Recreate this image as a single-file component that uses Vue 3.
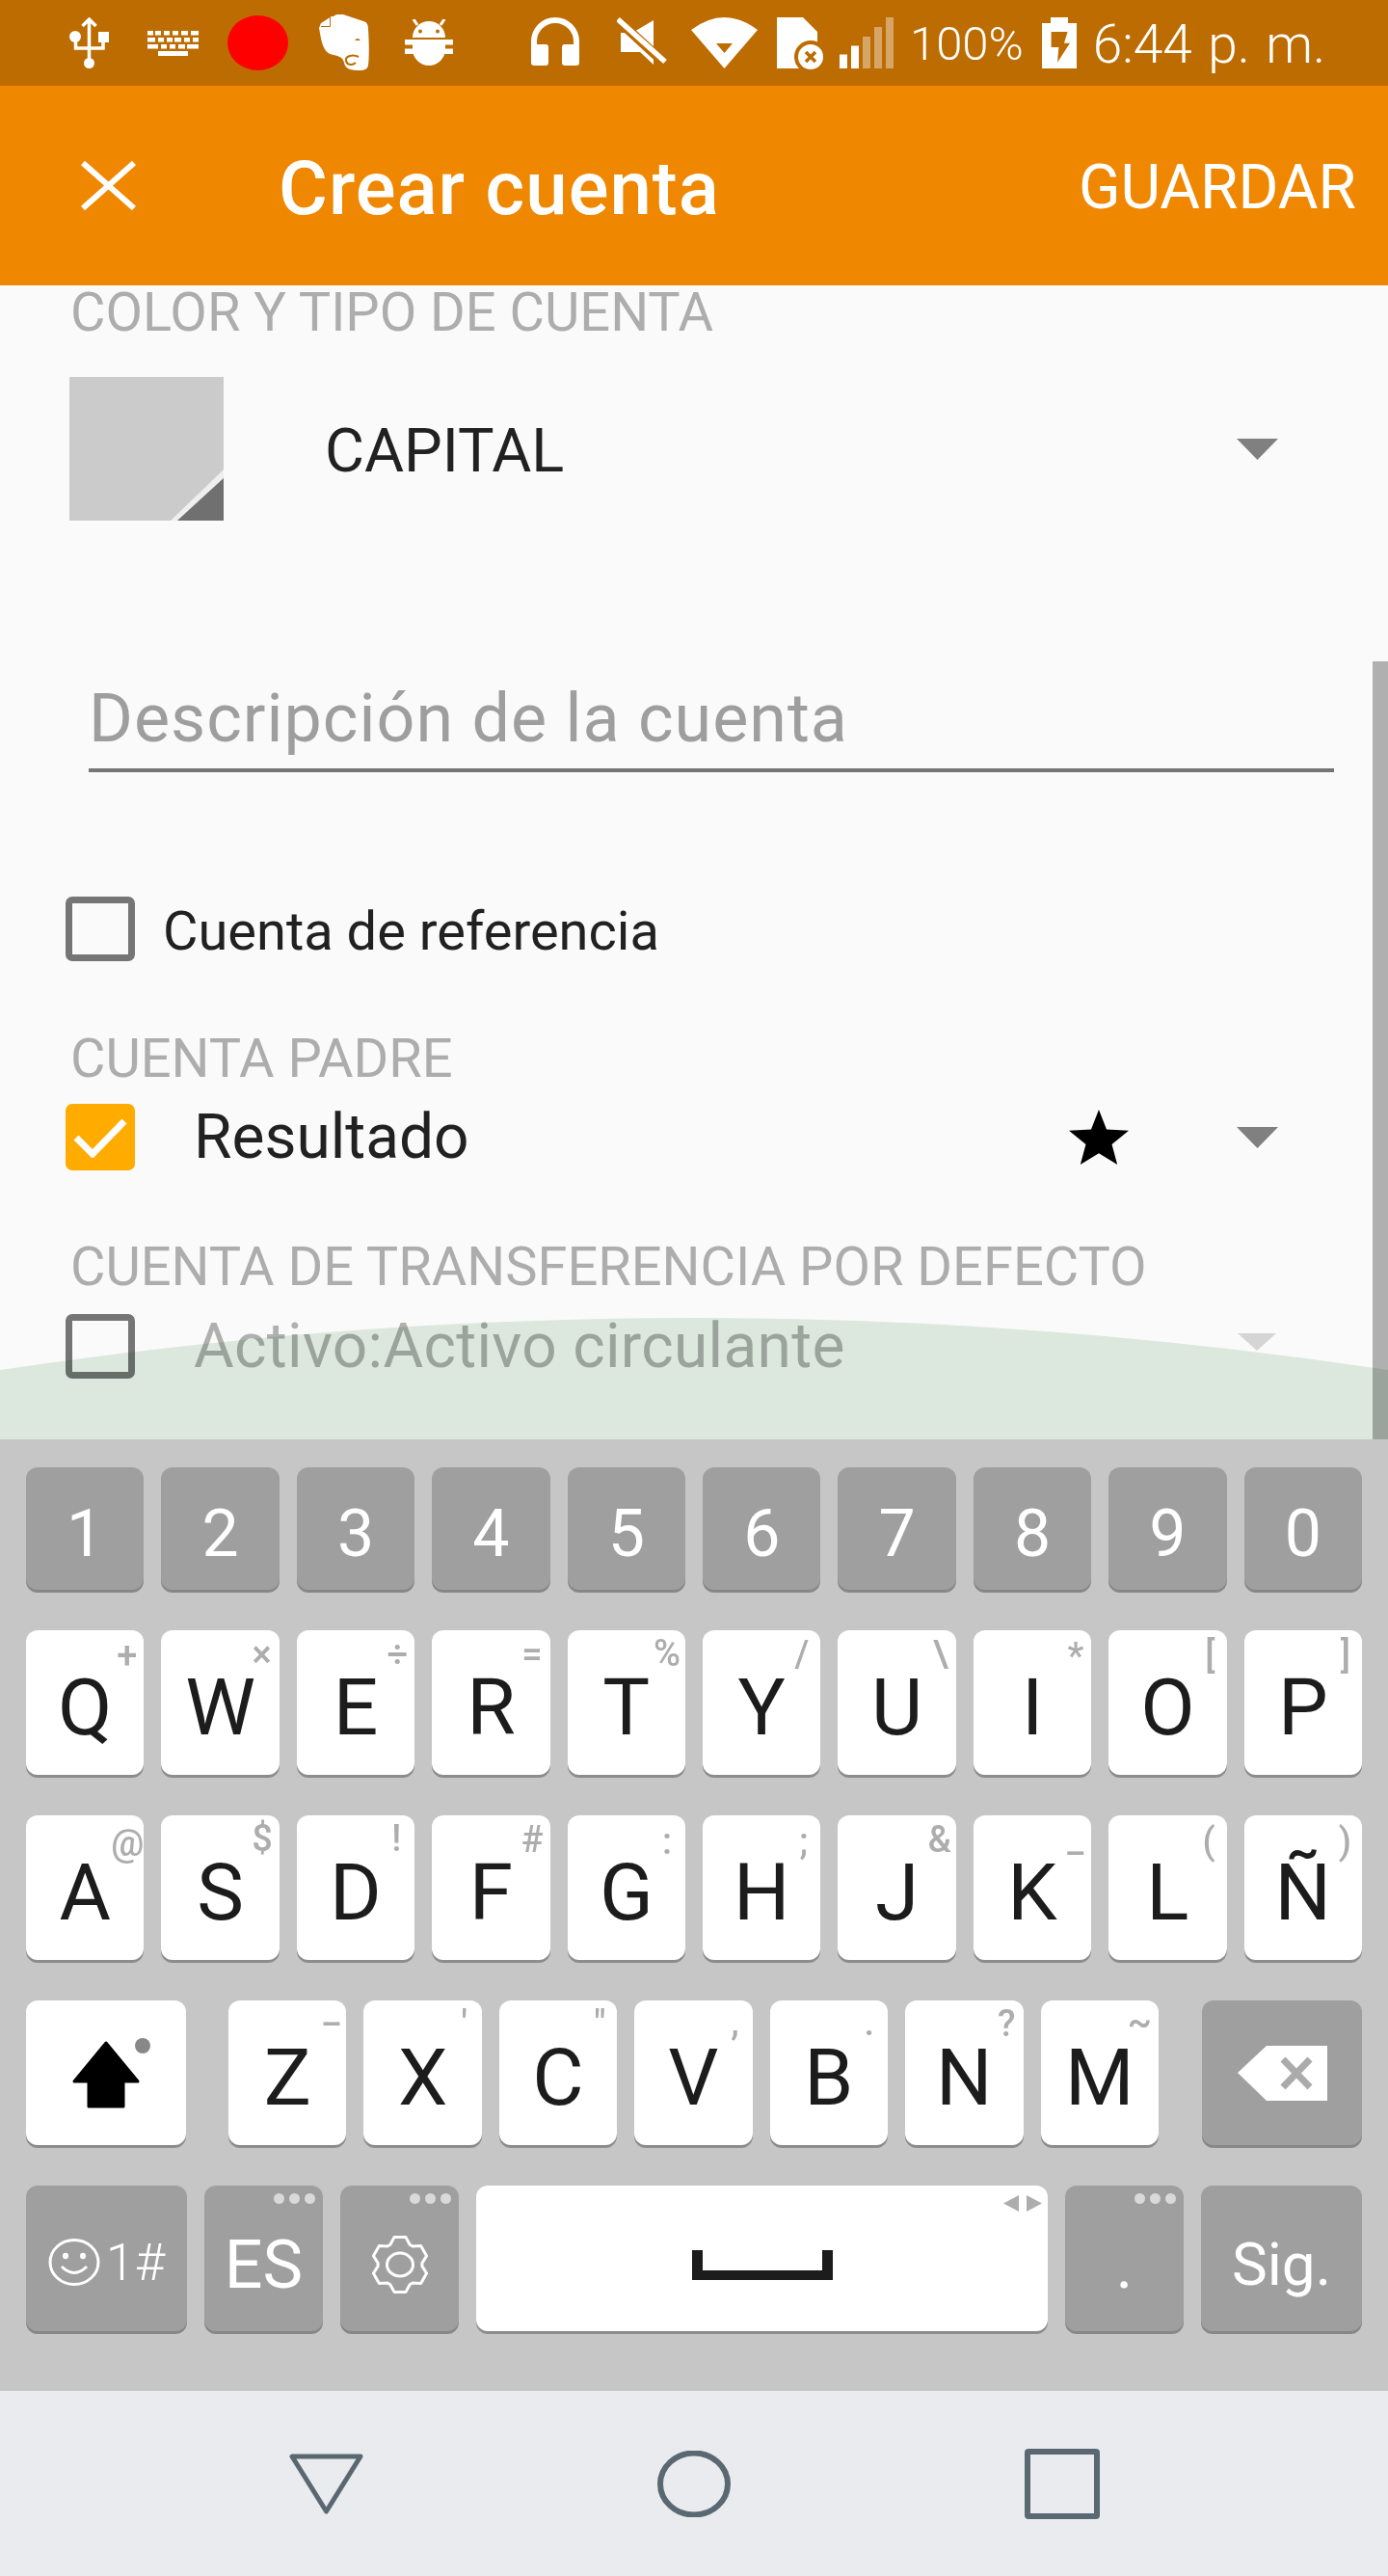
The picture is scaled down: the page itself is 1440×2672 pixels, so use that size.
<template>
  <div class="screen">
    <header class="status">
      <svg class="usb" width="41" height="53" viewBox="0 0 41 53">
        <g fill="none" stroke="#fff" stroke-width="3.5">
          <path d="M20.5 2V48M13.5 9L20.5 2L27.5 9" />
          <path d="M6.5 20V32H35V24" />
        </g>
        <circle cx="20.5" cy="47.5" r="5.5" fill="#fff" />
        <circle cx="6" cy="20" r="6" fill="#fff" />
        <rect x="30" y="15" width="11" height="11" fill="#fff" />
      </svg>
      <svg class="kbd" width="54" height="26" viewBox="0 0 54 26">
        <rect v-for="r in kbdKeys" :key="r.join()" :x="r[0]" :y="r[1]" :width="r[2]" :height="r[3]" fill="#fff" />
      </svg>
      <div class="rec"></div>
      <svg class="elephant" width="52" height="58" viewBox="0 0 52 58">
        <path fill="#fff" d="M15 2C18-1 24-1 28 1L46 7C50 8 51 11 51 15C52 30 52 45 51 53C50 57 47 58 42 58C34 58 27 57 26 50C25 45 21 43 15 42C7 41 4 34 2 25L0 14L2 9L13 2Z" />
        <path fill="none" stroke="#BC6C00" stroke-width="1" d="M2 12.5H11.5V3" />
        <path fill="#BC6C00" d="M37 27Q40 23 43 27Z" />
        <path fill="none" stroke="#BC6C00" stroke-width="2" d="M41 44C35 41 27 43 28 48C29 53 35 53 38 50" />
      </svg>
      <svg class="bug" width="50" height="48" viewBox="0 0 50 48">
        <path fill="#fff" d="M8 19A17 17 0 0 1 42 19Z" />
        <path stroke="#fff" stroke-width="3" d="M13 6L9 0M37 6L41 0" />
        <circle cx="16" cy="12.5" r="2" fill="#BC6C00" />
        <circle cx="34" cy="12.5" r="2" fill="#BC6C00" />
        <path fill="#fff" d="M8 21H42V31A17 17 0 0 1 8 31Z" />
        <rect y="21" width="50" height="5.5" fill="#fff" />
        <rect y="30.5" width="50" height="5.5" fill="#fff" />
      </svg>
      <svg class="phones" width="50" height="50" viewBox="0 0 50 50">
        <path fill="none" stroke="#fff" stroke-width="6" d="M3 32V25A22 22 0 0 1 47 25V32" />
        <rect y="28" width="18" height="22" rx="3" fill="#fff" />
        <rect x="32" y="28" width="18" height="22" rx="3" fill="#fff" />
      </svg>
      <svg class="mute" width="52" height="50" viewBox="0 0 52 50">
        <path fill="#fff" d="M4 16H16L38 3V49L24 36H4Z" />
        <path stroke="#BC6C00" stroke-width="10" d="M0 2L50 48" />
        <path stroke="#fff" stroke-width="5.5" d="M1 2L50 46" />
      </svg>
      <svg class="wifi" width="69" height="53" viewBox="0 0 69 53">
        <path fill="#fff" d="M0 13Q34.5-13 69 13L34.5 53Z" />
        <path fill="#BC6C00" d="M26 27H43L34.5 37Z" />
      </svg>
      <svg class="sim" width="52" height="55" viewBox="0 0 52 55">
        <path fill="#fff" d="M0 0H27L42 15V53H0Z" />
        <circle cx="35" cy="41" r="17" fill="#BC6C00" />
        <circle cx="35" cy="41" r="13" fill="#fff" />
        <path stroke="#BC6C00" stroke-width="3.5" d="M30 36L40 46M40 36L30 46" />
      </svg>
      <svg class="signal" width="56" height="53" viewBox="0 0 56 53">
        <rect v-for="(b, i) in signalBars" :key="i" :x="i * 12" :y="b" width="8" :height="53 - b" fill="#fff" :opacity="i < 2 ? 1 : 0.4" />
      </svg>
      <span class="pct">100%</span>
      <svg class="batt" width="36" height="53" viewBox="0 0 36 53">
        <path fill="#fff" d="M9 0H27V6H36V53H0V6H9Z" />
        <path fill="#BC6C00" d="M9.6 15H26.6L23 26.7H29L16 46.7L17.4 31H9.6Z" />
      </svg>
      <span class="clock">6:44 p. m.</span>
    </header>

    <div class="appbar">
      <svg class="close" width="57" height="51" viewBox="0 0 57 51">
        <path stroke="#fff" stroke-width="6" d="M2 2L55 49M55 2L2 49" />
      </svg>
      <h1 class="title">Crear cuenta</h1>
      <span class="save">GUARDAR</span>
    </div>

    <main class="content">
      <div class="label label--first">COLOR Y TIPO DE CUENTA</div>
      <div class="type-row">
        <svg width="160" height="149" viewBox="0 0 160 149">
          <rect width="160" height="149" fill="#CBCBCB" />
          <path fill="#EFEFEF" d="M105 149H112L160 105V96Z" />
          <path fill="#707070" d="M112 149L160 105V149Z" />
        </svg>
        <span class="type-name">CAPITAL</span>
        <svg class="caret" width="43" height="22" viewBox="0 0 43 22"><path d="M0 0H43L21.5 22Z" fill="#808080" /></svg>
      </div>

      <div class="field">Descripción de la cuenta</div>

      <div class="check-row check-row--ref">
        <span class="box"></span>
        <span class="ref-text">Cuenta de referencia</span>
      </div>

      <div class="label label--parent">CUENTA PADRE</div>
      <div class="check-row check-row--parent">
        <span class="box box--on">
          <svg width="56" height="42" viewBox="0 0 56 42"><path d="M3 21L20 38L53 4" fill="none" stroke="#fff" stroke-width="7" /></svg>
        </span>
        <span class="acc-text">Resultado</span>
        <svg class="star" width="62" height="57" viewBox="0 0 62 57">
          <path d="M31 0L39 20.5L62 21.8L44.5 36L50.2 57L31 45.3L11.8 57L17.5 36L0 21.8L23 20.5Z" fill="#000" />
        </svg>
        <svg class="caret caret--star" width="43" height="22" viewBox="0 0 43 22"><path d="M0 0H43L21.5 22Z" fill="#808080" /></svg>
      </div>

      <div class="label label--transfer">CUENTA DE TRANSFERENCIA POR DEFECTO</div>
      <div class="check-row check-row--transfer">
        <span class="box"></span>
        <span class="acc-text acc-text--off">Activo:Activo circulante</span>
        <svg class="caret caret--off" width="40" height="18" viewBox="0 0 40 18"><path d="M0 0H40L20 18Z" fill="#D5D5D5" /></svg>
      </div>

      <div class="scrollbar"></div>
      <svg class="glow" width="1440" height="126" viewBox="0 0 1440 126" preserveAspectRatio="none">
        <path d="M0 54Q720-54 1440 54V126H0Z" fill="#E1EDE3" />
      </svg>
    </main>

    <section class="keyboard">
      <div class="row row--num">
        <div v-for="n in numbers" :key="n" class="key key--dark key--num">{{ n }}</div>
      </div>

      <div v-for="(row, i) in letterRows" :key="i" class="row">
        <div v-for="k in row" :key="k[0]" class="key">
          <span class="hint" :style="hintPos(k)">{{ k[1] }}</span>
          <span class="letter">{{ k[0] }}</span>
        </div>
      </div>

      <div class="row">
        <div class="key key--side">
          <svg class="shift" width="70" height="70" viewBox="0 0 70 70">
            <path d="M35 2L68 42H53V68H17V42H2Z" fill="#000" stroke="#000" stroke-width="3" stroke-linejoin="round" />
          </svg>
          <span class="shift-dot"></span>
        </div>
        <div class="z-keys">
          <div v-for="k in bottomLetters" :key="k[0]" class="key">
            <span class="hint" :style="hintPos(k)">{{ k[1] }}</span>
            <span class="letter">{{ k[0] }}</span>
          </div>
        </div>
        <div class="key key--dark key--side">
          <svg width="93" height="57" viewBox="0 0 93 57">
            <path d="M0 28L30 0H93V57H30Z" fill="#fff" />
            <path d="M47 14L75 43M75 14L47 43" stroke="#ABABAB" stroke-width="7" />
          </svg>
        </div>
      </div>

      <div class="row row--last">
        <div class="key key--dark key--sym">
          <svg width="54" height="49" viewBox="0 0 54 49">
            <ellipse cx="27" cy="24.5" rx="25" ry="23" fill="none" stroke="#fff" stroke-width="3" />
            <ellipse cx="18" cy="18" rx="3" ry="3.2" fill="#fff" />
            <ellipse cx="36" cy="18" rx="3" ry="3.2" fill="#fff" />
            <path d="M14 29Q27 42 40 29" fill="none" stroke="#fff" stroke-width="3" />
          </svg>
          <span class="sym-text">1#</span>
        </div>
        <div class="key key--dark key--small">
          <span class="dots"><i></i><i></i><i></i></span>
          <span class="lang">ES</span>
        </div>
        <div class="key key--dark key--small">
          <span class="dots"><i></i><i></i><i></i></span>
          <svg width="62" height="60" viewBox="-31 -30 62 60">
            <polygon :points="gearPoints" fill="none" stroke="#fff" stroke-width="3" stroke-linejoin="round" />
            <ellipse rx="13.5" ry="12" fill="none" stroke="#fff" stroke-width="3" />
          </svg>
        </div>
        <div class="key key--space">
          <svg class="arrows" width="40" height="17" viewBox="0 0 40 17">
            <path d="M16 0V17L0 8.5ZM24 0V17L40 8.5Z" fill="#ADADAD" />
          </svg>
          <span class="spacebar"></span>
        </div>
        <div class="key key--dark key--small">
          <span class="dots"><i></i><i></i><i></i></span>
          <span class="dot-label">.</span>
        </div>
        <div class="key key--dark key--next">Sig.</div>
      </div>
    </section>

    <nav class="nav">
      <svg width="77" height="63" viewBox="0 0 77 63">
        <path d="M3 3H74L38.5 60Z" fill="none" stroke="#5A6872" stroke-width="5" stroke-linejoin="round" />
      </svg>
      <svg width="76" height="69" viewBox="0 0 76 69">
        <ellipse cx="38" cy="34.5" rx="35" ry="32" fill="none" stroke="#5A6872" stroke-width="6" />
      </svg>
      <svg width="78" height="73" viewBox="0 0 78 73">
        <rect x="3" y="3" width="72" height="67" rx="1" fill="none" stroke="#5A6872" stroke-width="6" />
      </svg>
    </nav>
  </div>
</template>

<script setup>
const numbers = ['1', '2', '3', '4', '5', '6', '7', '8', '9', '0'];

// [letter, hint, right offset, top offset]
const letterRows = [
  [
    ['Q', '+', 7, 6], ['W', '×', 8, 5], ['E', '÷', 7, 5], ['R', '=', 8, 5], ['T', '%', 5, 4],
    ['Y', '/', 12, 5], ['U', '\\', 8, 5], ['I', '*', 8, 7], ['O', '[', 12, 6], ['P', ']', 12, 6],
  ],
  [
    ['A', '@', 0, 9], ['S', '$', 7, 4], ['D', '!', 14, 4], ['F', '#', 7, 5], ['G', ':', 14, 7],
    ['H', ';', 13, 7], ['J', '&', 5, 5], ['K', '_', 8, 4], ['L', '(', 12, 7], ['Ñ', ')', 11, 7],
  ],
];

const bottomLetters = [
  ['Z', '_', 7, -11], ['X', "'", 15, 4], ['C', '"', 12, 4], ['V', ',', 14, 2],
  ['B', '.', 14, 3], ['N', '?', 8, 4], ['M', '~', 7, 2],
];

const hintPos = (k) => ({ right: k[2] + 'px', top: k[3] + 'px' });

const signalBars = [38.5, 29.5, 20, 10, 0];

const kbdKeys = [
  ...[[0, 6], [8, 6], [17, 6], [26, 6], [35, 7], [45, 8]].map(([x, w]) => [x, 0, w, 4.5]),
  ...[[0, 8], [11, 6], [20, 6], [28, 7], [38, 6], [47, 6]].map(([x, w]) => [x, 7, w, 4.5]),
  ...[[0, 11], [14, 6], [23, 6], [32, 7], [41, 12]].map(([x, w]) => [x, 14, w, 4.5]),
  [11, 21, 31, 5],
];

const gearPoints = (() => {
  const pts = [];
  for (let i = 0; i < 6; i++) {
    const a = -90 + i * 60;
    [[-26, 23], [-12, 29], [12, 29], [26, 23]].forEach(([d, r]) => {
      const t = ((a + d) * Math.PI) / 180;
      pts.push(`${(Math.cos(t) * r).toFixed(1)},${(Math.sin(t) * r).toFixed(1)}`);
    });
  }
  return pts.join(' ');
})();
</script>

<style scoped>
.screen {
  width: 1440px;
  height: 2672px;
  overflow: hidden;
  font-family: Roboto, "Liberation Sans", sans-serif;
}

.status {
  height: 89px;
  background: #BC6C00;
  display: flex;
  align-items: flex-start;
  color: #fff;
  position: relative;
}
.status svg, .rec { flex: none; }
.usb { margin: 18px 0 0 72px; }
.kbd { margin: 32px 0 0 40px; }
.rec {
  width: 63px;
  height: 57px;
  margin: 16px 0 0 29px;
  border-radius: 50%;
  background: #f00;
}
.elephant { margin: 15px 0 0 32px; }
.bug { margin: 20px 0 0 37px; }
.phones { margin: 18px 0 0 81px; }
.mute { margin: 18px 0 0 39px; }
.wifi { margin: 18px 0 0 25px; }
.sim { margin: 18px 0 0 20px; }
.signal { margin: 18px 0 0 13px; }
.pct {
  margin-left: 17px;
  font-size: 49px;
  font-weight: 300;
  line-height: 92px;
}
.batt { margin: 18px 0 0 19px; }
.clock {
  margin-left: 17px;
  font-size: 55px;
  font-weight: 300;
  line-height: 92px;
  word-spacing: 3px;
  white-space: nowrap;
}

.appbar {
  height: 207px;
  background: #EF8700;
  display: flex;
  align-items: center;
  color: #fff;
}
.close { margin-left: 84px; flex: none; }
.title {
  margin: 5px 0 0 148px;
  font-size: 78px;
  font-weight: 500;
  letter-spacing: 1px;
}
.save {
  margin-left: auto;
  padding: 3px 33px 0 0;
  font-size: 64px;
  font-weight: 400;
}

.content {
  height: 1197px;
  background: #FAFAFA;
  position: relative;
}
.label {
  height: 56px;
  line-height: 56px;
  padding-left: 73px;
  font-size: 56px;
  color: #ADADAD;
  white-space: nowrap;
}
.label--parent { margin-top: 73px; }
.label--transfer { margin-top: 72px; }

.type-row {
  margin-top: 39px;
  padding: 0 114px 0 72px;
  display: flex;
  align-items: center;
}
.type-name {
  margin-left: 105px;
  padding-top: 3px;
  font-size: 63px;
  color: #212121;
}
.caret { margin-left: auto; flex: none; }
.caret--star { margin-left: 112px; }
.caret--off { margin-right: 2px; margin-top: -10px; }

.field {
  margin: 160px 56px 0 92px;
  height: 97px;
  line-height: 90px;
  font-size: 70px;
  letter-spacing: 1px;
  color: #9E9E9E;
  border-bottom: 4px solid #757575;
}

.check-row {
  display: flex;
  align-items: center;
  padding: 0 114px 0 68px;
}
.check-row--ref { margin-top: 129px; height: 67px; }
.check-row--parent { margin-top: 19px; height: 69px; }
.check-row--transfer { margin-top: 21px; height: 67px; }
.box {
  width: 72px;
  height: 67px;
  flex: none;
  box-sizing: border-box;
  border: 7px solid #757575;
  border-radius: 7px;
}
.box--on {
  height: 69px;
  background: #FFAB00;
  border: none;
  display: flex;
  align-items: center;
  justify-content: center;
}
.ref-text {
  margin: 6px 0 0 29px;
  font-size: 56px;
  line-height: 67px;
  color: #212121;
}
.acc-text {
  margin-left: 61px;
  font-size: 64px;
  color: #212121;
}
.acc-text--off { color: #B0B0B0; letter-spacing: 0.3px; }
.star { margin-left: auto; flex: none; }

.scrollbar {
  position: absolute;
  top: 390px;
  right: 0;
  bottom: 0;
  width: 16px;
  background: #B0B0B0;
}
.glow {
  position: absolute;
  left: 0;
  bottom: 0;
  mix-blend-mode: multiply;
}

.keyboard {
  height: 987px;
  box-sizing: border-box;
  padding: 29px 27px 0 27px;
  background: #C6C6C6;
  display: flex;
  flex-direction: column;
  gap: 42px;
}
.row {
  height: 150px;
  display: flex;
  gap: 18px;
}
.row--num { height: 127px; }
.row--last { height: 151px; }
.key {
  flex: 1 1 0;
  min-width: 0;
  position: relative;
  display: flex;
  align-items: center;
  justify-content: center;
  border-radius: 12px;
  background: #fff;
  box-shadow: 0 3px 0 #8C8C8C;
  color: #1C1C1C;
}
.key--dark {
  background: #9F9F9F;
  color: #fff;
  box-shadow: 0 3px 0 #878787;
}
.key--num {
  font-size: 68px;
  padding-top: 10px;
  box-sizing: border-box;
}
.letter {
  font-size: 82px;
  padding-top: 10px;
}
.hint {
  position: absolute;
  height: 40px;
  line-height: 40px;
  font-size: 38px;
  font-weight: 500;
  color: #ADADAD;
}
.key--side { flex: 0 0 166px; }
.shift { margin-top: 4px; }
.shift-dot {
  position: absolute;
  top: 39px;
  left: 113px;
  width: 16px;
  height: 16px;
  border-radius: 50%;
  background: #888;
}
.z-keys {
  flex: 0 0 965px;
  margin: 0 27px 0 26px;
  display: flex;
  gap: 18px;
}

.key--sym { flex: 0 0 167px; gap: 6px; padding-top: 8px; box-sizing: border-box; }
.sym-text { font-size: 54px; font-weight: 300; }
.key--small { flex: 0 0 123px; }
.key--next { flex: 0 0 167px; font-size: 62px; padding-top: 12px; box-sizing: border-box; }
.lang { font-size: 70px; padding-top: 12px; }
.dot-label { font-size: 66px; padding-top: 16px; }
.key--small svg { margin-top: 12px; }
.dots {
  position: absolute;
  top: 8px;
  right: 8px;
  display: flex;
  gap: 5px;
}
.dots i {
  width: 11px;
  height: 11px;
  border-radius: 50%;
  background: #D9D9D9;
}
.key--space { flex: 0 0 593px; }
.arrows {
  position: absolute;
  top: 10px;
  right: 6px;
}
.spacebar {
  width: 146px;
  height: 31px;
  margin-top: 14px;
  box-sizing: border-box;
  border: solid #1C1C1C;
  border-width: 0 11px 10px;
}

.nav {
  height: 192px;
  box-sizing: border-box;
  padding-left: 300px;
  background: #E9EBEF;
  display: flex;
  align-items: center;
  gap: 305px;
}
</style>
